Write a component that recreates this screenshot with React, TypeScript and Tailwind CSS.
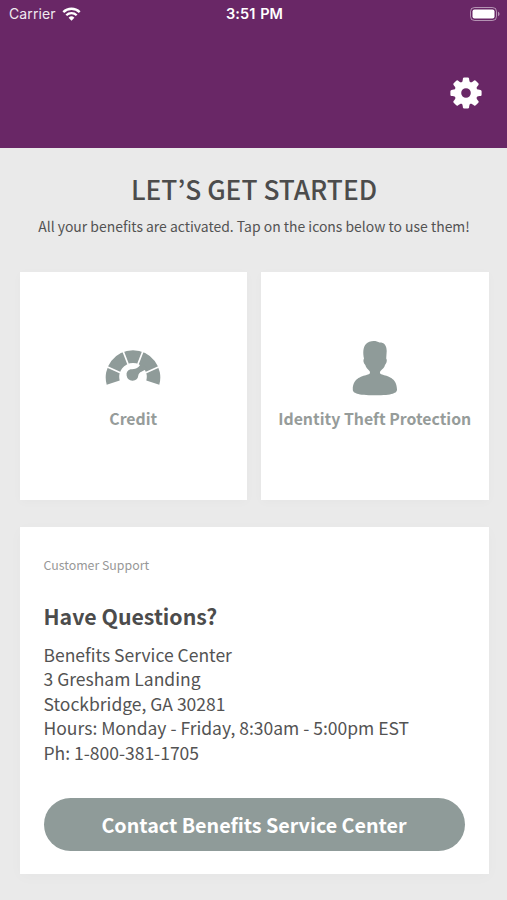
import type { ReactNode } from "react";

function StatusBar() {
  return (
    <div className="flex h-[27px] items-center justify-between pl-[9px] pr-[7px] font-['Inter',sans-serif] text-[14px] leading-none text-white">
      <div className="flex w-[90px] items-center gap-[6px]">
        <span className="tracking-[0.1px] opacity-90">Carrier</span>
        <svg className="h-[14px] w-[19px]" viewBox="0 0 19 14" fill="none" stroke="white">
          <path d="M1.3 5.1a11.7 11.7 0 0 1 16.4 0" strokeWidth="2.4" />
          <path d="M4.3 8.3a7.4 7.4 0 0 1 10.4 0" strokeWidth="2.3" />
          <path d="M9.5 13.7 6.6 10.8a4.1 4.1 0 0 1 5.8 0z" fill="white" stroke="none" />
        </svg>
      </div>
      <span className="pt-px text-[14.5px] font-semibold leading-4 tracking-[0.1px] [word-spacing:1px]">3:51 PM</span>
      <div className="flex w-[90px] justify-end">
        <svg className="h-[14px] w-[30px]" viewBox="0 0 30 14" fill="none">
          <rect x="0.5" y="0.5" width="26" height="13" rx="4" stroke="white" strokeOpacity="0.5" />
          <rect x="2.5" y="2.5" width="22" height="9" rx="2" fill="white" />
          <path d="M28 4.8c2 .7 2 3.7 0 4.4z" fill="white" fillOpacity="0.5" />
        </svg>
      </div>
    </div>
  );
}

function Gear() {
  const teeth = [0, 45, 90, 135, 180, 225, 270, 315];
  return (
    <svg className="h-8 w-8" viewBox="-16 -16 32 32" fill="white">
      <circle r="8.2" fill="none" stroke="white" strokeWidth="6.8" />
      {teeth.map((a) => (
        <path
          key={a}
          d="M-4.5 -9.5C-3.4 -11.5-3.2 -13-3.1 -14.5Q-2.9 -15.6-1.8 -15.6H1.8Q2.9 -15.6 3.1 -14.5C3.2 -13 3.4 -11.5 4.5 -9.5z"
          transform={`rotate(${a})`}
        />
      ))}
    </svg>
  );
}

function Gauge() {
  return (
    <svg className="h-[36px] w-[56px]" viewBox="0 0 56 36">
      <path d="M1.7 34.8A27.3 27.3 0 1 1 54.3 34.8L41.3 30.5A13.8 13.8 0 1 0 14.7 30.5z" fill="#8f9b99" />
      <g stroke="white" strokeWidth="1.7">
        <path d="M16.5 23.3 2 16.8M23.6 15.5 18 1M32.4 15.5 38 1M39 23.5 54 16.8" />
      </g>
      <path d="M25.5 19.2C30 19.2 33.5 18.3 36 13.5L42.5 18.4C38 21.3 34 21.5 33.3 25.5A5.9 5.9 0 1 1 25.5 19.2z" fill="#8f9b99" />
    </svg>
  );
}

function Person() {
  return (
    <svg className="h-[56px] w-[46px]" viewBox="0 0 46 56" fill="#8f9b99">
      <path d="M12 18.5C10.8 13 11 7 14 4C17 .5 24 .2 27.5 2.6C32 2.5 34.5 5 34.7 11L34.2 18.5C35.5 20 34.5 23.5 33 25C32.5 27.5 30.5 29 28.5 31C27.3 32.5 28 34 30 34.6C35 36.3 45 37.500 45 49.5C45 53 41 55.3 23 55.3S.8 53 .8 49.5C.8 37.500 11 36.3 16 34.6C18 34 18.5 32.500 17.500 31C15.500 29 14 27.500 13.300 25C11.500 23.500 10.800 20 12 18.500z" />
    </svg>
  );
}

function Tile({ icon, children }: { icon: ReactNode; children: ReactNode }) {
  return (
    <button className="flex h-[228px] flex-1 flex-col items-center bg-white pt-[68px] shadow-[0_2px_10px_rgba(0,0,0,0.025)]">
      <span className="flex h-[57px] items-center">{icon}</span>
      <span className="mt-[10px] whitespace-nowrap text-[15.85px] font-bold leading-6 text-[#969c9a]">{children}</span>
    </button>
  );
}

export default function App() {
  return (
    <div className="h-[900px] w-[507px] overflow-hidden bg-[#eaeaea] font-['Noto_Sans_CJK_KR',sans-serif] text-[#535353]">
      <header className="h-[147.5px] bg-[#692766]">
        <StatusBar />
        <div className="flex justify-end pr-[25px] pt-[50px]">
          <Gear />
        </div>
      </header>
      <main className="pl-[19.5px] pr-[18.5px]">
        <h1 className="pt-[23.5px] text-center text-[26.3px] font-medium leading-9 text-[#4c4c4c]">LET’S GET STARTED</h1>
        <p className="mt-[7px] whitespace-nowrap text-center text-[13.95px] leading-6">
          All your benefits are activated. Tap on the icons below to use them!
        </p>
        <div className="mt-[33.7px] flex gap-[14px]">
          <Tile icon={<Gauge />}>Credit</Tile>
          <Tile icon={<Person />}>Identity Theft Protection</Tile>
        </div>
        <section className="mt-[27px] flex h-[347px] flex-col bg-white px-[24px] pt-[28px] shadow-[0_3px_14px_rgba(0,0,0,0.025)]">
          <p className="text-[12.35px] leading-5 text-[#979797]">Customer Support</p>
          <h2 className="mt-[25px] text-[21.3px] font-bold leading-8 text-[#4c4c4c]">Have Questions?</h2>
          <address className="mt-[11px] text-[17.5px] not-italic leading-[24.5px]">
            <div>Benefits Service Center</div>
            <div>3 Gresham Landing</div>
            <div>Stockbridge, GA 30281</div>
            <div>Hours: Monday - Friday, 8:30am - 5:00pm EST</div>
            <div>Ph: 1-800-381-1705</div>
          </address>
          <button className="mt-[32.5px] h-[53px] rounded-full bg-[#8f9b99] pt-px text-[19.7px] font-bold text-white">
            Contact Benefits Service Center
          </button>
        </section>
      </main>
    </div>
  );
}
